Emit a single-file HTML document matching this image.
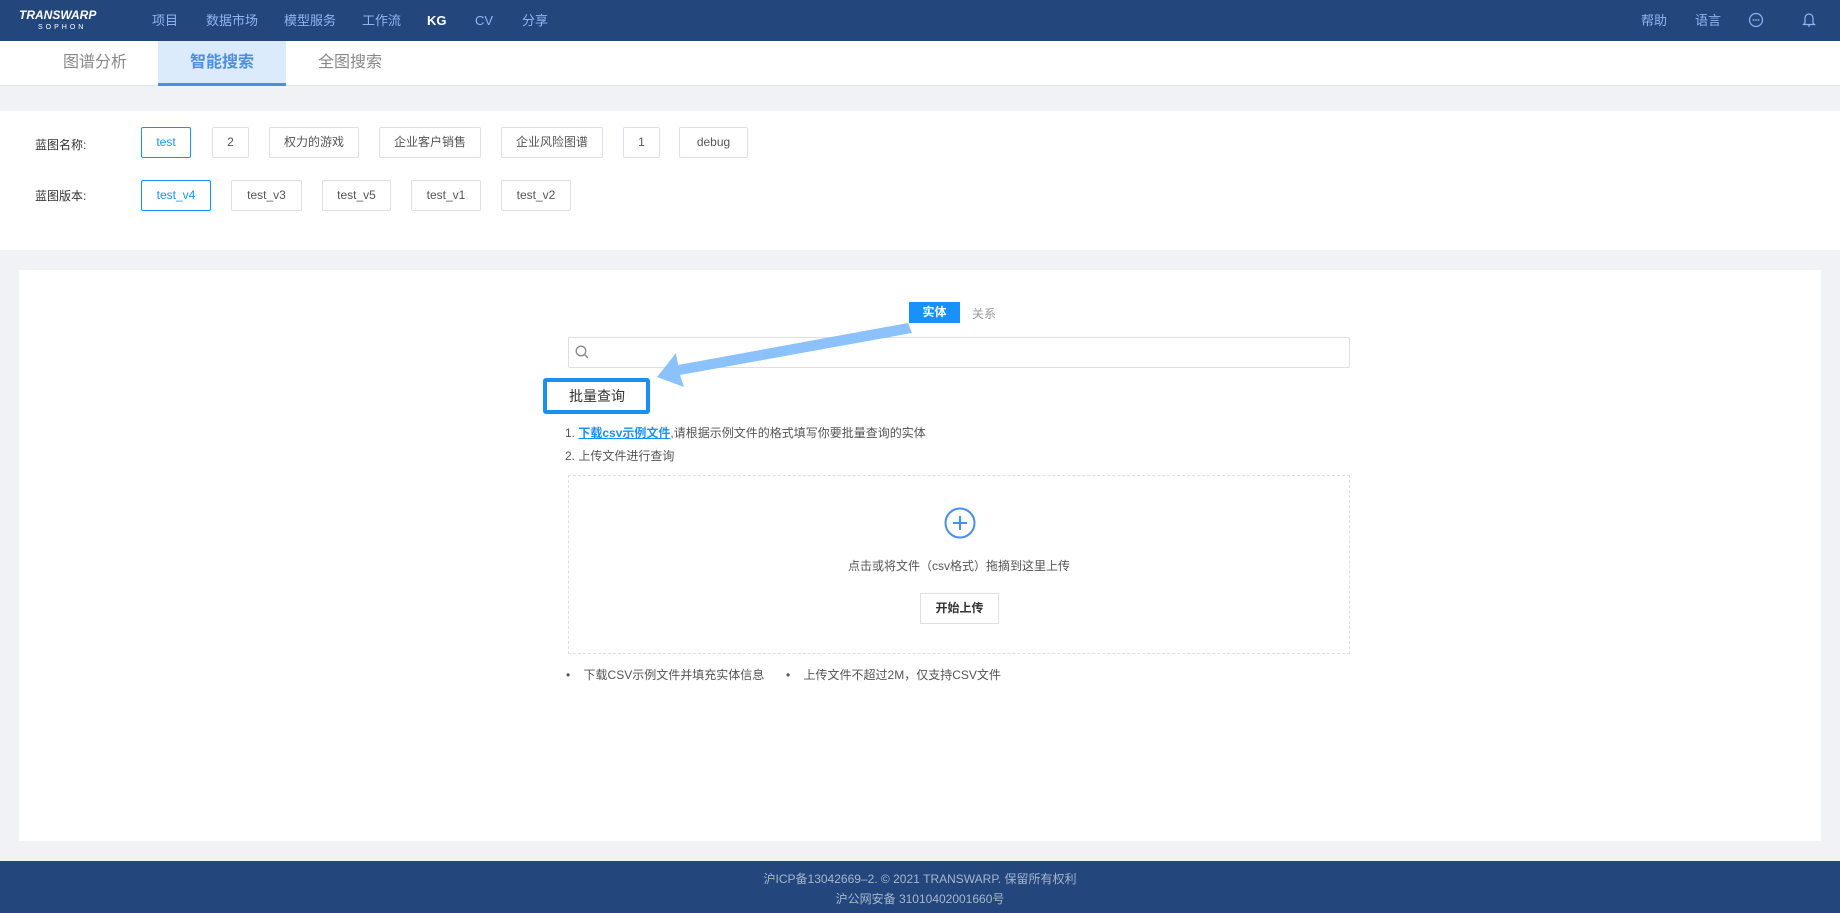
<!DOCTYPE html>
<html><head><meta charset="utf-8"><style>
*{box-sizing:border-box;margin:0;padding:0}
body{width:1840px;height:913px;background:#f0f2f5;font-family:"Liberation Sans","Noto Sans CJK SC",sans-serif;position:relative;overflow:hidden;color:#333}
.abs{position:absolute}
.nav{left:0;top:0;width:1840px;height:41px;background:#23477d}
.nav span{position:absolute;top:0;line-height:41px;font-size:13px;color:#8fb4ee}
.tabs{left:0;top:41px;width:1840px;height:45px;background:#fff;border-bottom:1px solid #dfe3ea}
.tab{position:absolute;top:0;height:45px;line-height:44px;font-size:16px;color:#888;text-align:center}
.card1{left:0;top:111px;width:1840px;height:139px;background:#fff}
.lbl{font-size:12px;color:#333}
.b{position:absolute;height:31px;line-height:29px;border:1px solid #dcdfe6;border-radius:2px;font-size:12px;color:#555;text-align:center;background:#fff}
.b.on{border-color:#1890ff;color:#1890ff}
.card2{left:19px;top:270px;width:1802px;height:571px;background:#fff}
.foot{left:0;top:861px;width:1840px;height:52px;background:#23477d;color:#a7b5cc;font-size:12px;text-align:center}
</style></head><body>
<div class="abs nav">
 <div class="abs" style="left:19px;top:8px;color:#fff;font-style:italic;font-weight:bold;font-size:12px">TRANSWARP</div>
 <div class="abs" style="left:38px;top:24px;color:#fff;font-size:7px;letter-spacing:3px">SOPHON</div>
 <span style="left:152px">项目</span><span style="left:206px">数据市场</span><span style="left:284px">模型服务</span><span style="left:362px">工作流</span><span style="left:427px;color:#fff;font-weight:bold">KG</span><span style="left:475px">CV</span><span style="left:522px">分享</span>
 <span style="left:1641px">帮助</span><span style="left:1695px">语言</span>
 <svg class="abs" style="left:1748px;top:12px" width="16" height="16" viewBox="0 0 16 16"><circle cx="8" cy="8" r="6.5" fill="none" stroke="#8fb4ee" stroke-width="1.2"/><circle cx="5.5" cy="8" r=".9" fill="#8fb4ee"/><circle cx="8" cy="8" r=".9" fill="#8fb4ee"/><circle cx="10.5" cy="8" r=".9" fill="#8fb4ee"/></svg>
 <svg class="abs" style="left:1802px;top:11px" width="14" height="17" viewBox="0 0 14 17"><path d="M3 12V7a4 4 0 0 1 8 0v5l1.5 1.5h-11z M6 15h2" fill="none" stroke="#8fb4ee" stroke-width="1.2"/></svg>
</div>
<div class="abs tabs">
 <div class="tab" style="left:45px;width:100px">图谱分析</div>
 <div class="tab" style="left:158px;width:128px;background:#dcebfb;color:#4a8fe0;font-weight:bold;border-bottom:3px solid #4a90e2">智能搜索</div>
 <div class="tab" style="left:300px;width:100px">全图搜索</div>
</div>
<div class="abs card1">
 <div class="abs lbl" style="left:35px;top:25px">蓝图名称:</div>
 <div class="b on" style="left:141px;top:16px;width:50px">test</div>
 <div class="b" style="left:212px;top:16px;width:37px">2</div>
 <div class="b" style="left:269px;top:16px;width:90px">权力的游戏</div>
 <div class="b" style="left:379px;top:16px;width:102px">企业客户销售</div>
 <div class="b" style="left:501px;top:16px;width:102px">企业风险图谱</div>
 <div class="b" style="left:623px;top:16px;width:37px">1</div>
 <div class="b" style="left:679px;top:16px;width:69px">debug</div>
 <div class="abs lbl" style="left:35px;top:76px">蓝图版本:</div>
 <div class="b on" style="left:141px;top:69px;width:70px">test_v4</div>
 <div class="b" style="left:231px;top:69px;width:71px">test_v3</div>
 <div class="b" style="left:322px;top:69px;width:69px">test_v5</div>
 <div class="b" style="left:411px;top:69px;width:70px">test_v1</div>
 <div class="b" style="left:501px;top:69px;width:70px">test_v2</div>
</div>
<div class="abs card2"></div>
<div class="abs" style="left:909px;top:302px;width:51px;height:21px;background:#1890ff;color:#fff;font-size:12px;font-weight:bold;text-align:center;line-height:21px">实体</div>
<div class="abs" style="left:972px;top:305px;font-size:12px;color:#999">关系</div>
<div class="abs" style="left:568px;top:337px;width:782px;height:31px;border:1px solid #dcdfe6;border-radius:2px"></div>
<svg class="abs" style="left:575px;top:345px" width="15" height="15" viewBox="0 0 15 15"><circle cx="6" cy="6" r="4.8" fill="none" stroke="#888" stroke-width="1.3"/><path d="M9.5 9.5L13 13" stroke="#888" stroke-width="1.3"/></svg>
<div class="abs" style="left:543px;top:378px;width:107px;height:36px;border:4px solid #1a90f0;border-radius:3px;font-size:14px;line-height:28px;padding-left:22px;color:#333">批量查询</div>
<svg class="abs" style="left:640px;top:315px" width="280" height="80"><polygon points="268,8 272,18 40,60 44,72 17,62 36,38 38,50" fill="#8cc2fb"/></svg>
<div class="abs" style="left:565px;top:424px;font-size:12px;color:#555">1. <span style="color:#1890ff;text-decoration:underline;font-weight:bold">下载csv示例文件</span>,请根据示例文件的格式填写你要批量查询的实体</div>
<div class="abs" style="left:565px;top:447px;font-size:12px;color:#555">2. 上传文件进行查询</div>
<div class="abs" style="left:568px;top:475px;width:782px;height:179px;border:1px dashed #dcdfe6"></div>
<svg class="abs" style="left:943px;top:506px" width="34" height="34" viewBox="0 0 34 34"><circle cx="17" cy="17" r="14.5" fill="none" stroke="#4a90e2" stroke-width="2"/><path d="M17 10v14M10 17h14" stroke="#4a90e2" stroke-width="2"/></svg>
<div class="abs" style="left:568px;top:557px;width:782px;text-align:center;font-size:12px;color:#555">点击或将文件（csv格式）拖摘到这里上传</div>
<div class="abs" style="left:920px;top:593px;width:79px;height:31px;border:1px solid #dcdfe6;font-size:12px;font-weight:bold;text-align:center;line-height:29px;color:#333">开始上传</div>
<div class="abs" style="left:566px;top:666px;font-size:12px;color:#555">•&nbsp;&nbsp;&nbsp;&nbsp;下载CSV示例文件并填充实体信息</div>
<div class="abs" style="left:786px;top:666px;font-size:12px;color:#555">•&nbsp;&nbsp;&nbsp;&nbsp;上传文件不超过2M，仅支持CSV文件</div>
<div class="abs foot"><div style="margin-top:9px">沪ICP备13042669–2. © 2021 TRANSWARP. 保留所有权利</div><div style="margin-top:3px">沪公网安备 31010402001660号</div></div>
</body></html>
